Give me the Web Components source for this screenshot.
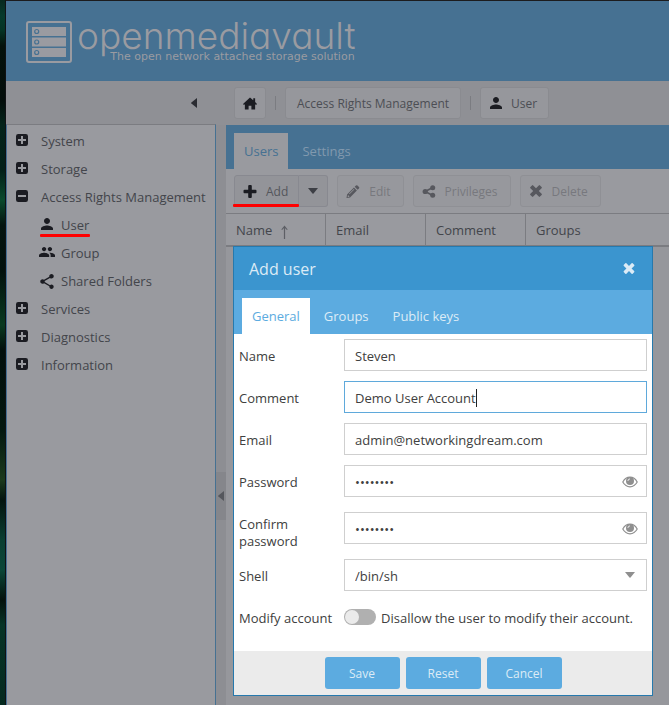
<!DOCTYPE html>
<html lang="en">
<head>
<meta charset="utf-8">
<title>openmediavault</title>
<style>
  html, body { height: 100%; }
  body { margin: 0; background: #96979c; font: 13px/17px "Open Sans", "Liberation Sans", sans-serif; color: #43454b; }
</style>
</head>
<body>
<omv-app></omv-app>
<script>
const ICONS = {
  person: ['4 4 16 16', '<path d="M12 12c2.21 0 4-1.79 4-4s-1.79-4-4-4-4 1.79-4 4 1.79 4 4 4zm0 2c-2.67 0-8 1.34-8 4v2h16v-2c0-2.66-5.33-4-8-4z"/>'],
  group: ['1 4 22 16', '<path d="M16 11c1.66 0 2.99-1.34 2.99-3S17.66 5 16 5c-1.66 0-3 1.34-3 3s1.34 3 3 3zm-8 0c1.66 0 2.99-1.34 2.99-3S9.66 5 8 5C6.34 5 5 6.34 5 8s1.34 3 3 3zm0 2c-2.33 0-7 1.17-7 3.5V19h14v-2.5c0-2.33-4.67-3.5-7-3.5zm8 0c-.29 0-.62.02-.97.05 1.16.84 1.97 1.97 1.97 3.45V19h6v-2.5c0-2.33-4.67-3.5-7-3.5z"/>'],
  share: ['3 2 18 20', '<path d="M18 16.08c-.76 0-1.44.3-1.96.77L8.91 12.7c.05-.23.09-.46.09-.7s-.04-.47-.09-.7l7.05-4.11c.54.5 1.25.81 2.04.81 1.66 0 3-1.34 3-3s-1.34-3-3-3-3 1.34-3 3c0 .24.04.47.09.7L8.04 9.81C7.5 9.31 6.79 9 6 9c-1.66 0-3 1.34-3 3s1.34 3 3 3c.79 0 1.5-.31 2.04-.81l7.12 4.16c-.05.21-.08.43-.08.65 0 1.61 1.31 2.92 2.92 2.92s2.92-1.31 2.92-2.92-1.31-2.92-2.92-2.92z"/>'],
  shareAlt: ['0 0 14 14', '<path d="M11.2 2.8 2.8 7l8.4 4.2" fill="none" stroke="currentColor" stroke-width="1.8"/><circle cx="11" cy="2.9" r="2.7"/><circle cx="2.9" cy="7" r="2.8"/><circle cx="11" cy="11.1" r="2.7"/>'],
  expand: ['0 0 12 12', '<path fill-rule="evenodd" d="M2.2 0h7.6A2.2 2.2 0 0 1 12 2.200v7.600A2.200 2.200 0 0 1 9.800 12H2.200A2.200 2.200 0 0 1 0 9.800V2.200A2.200 2.200 0 0 1 2.200 0zM5 2v3H2v2h3v3h2V7h3V5H7V2z"/>'],
  collapse: ['0 0 12 12', '<path fill-rule="evenodd" d="M2.200 0h7.600A2.200 2.200 0 0 1 12 2.200v7.600A2.200 2.200 0 0 1 9.800 12H2.200A2.200 2.200 0 0 1 0 9.800V2.200A2.200 2.200 0 0 1 2.200 0zM2 5v2h8V5z"/>'],
  home: ['0 0 15 13', '<path d="M7.500 0 11 3V1h2v3.800L15 7l-1 1-1-.6V13H9V9H6v4H2V7.400L1 8 0 7z"/>'],
  plus: ['0 0 13 13', '<path d="M5.700 0h1.600q1 0 1 1v3.700H12q1 0 1 1v1.600q0 1-1 1H8.300V12q0 1-1 1H5.700q-1 0-1-1V8.300H1q-1 0-1-1V5.700q0-1 1-1h3.700V1q0-1 1-1z"/>'],
  pencil: ['0 0 14 14', '<path fill-rule="evenodd" d="M10.200.6q.8-.8 1.600 0l1.600 1.600q.8.800 0 1.600L12 5.200 8.800 2zM8 2.800 11.200 6 3.800 13.400 0 14l.6-3.800zM1.600 10.700l-.4 2 1 .2 1.100-.5zM7.900 4.300 2.700 9.500l.5.5 5.200-5.200z"/>'],
  times: ['0 0 12 12', '<path d="M2 .4q.6-.6 1.200 0L6 3.200 8.800.4q.6-.6 1.200 0L11.600 2q.6.600 0 1.200L8.800 6l2.800 2.800q.6.600 0 1.200L10 11.600q-.6.600-1.200 0L6 8.800l-2.800 2.800q-.6.600-1.200 0L.4 10q-.6-.6 0-1.200L3.200 6 .4 3.200q-.6-.6 0-1.200z"/>'],
  down: ['0 0 10 6', '<path d="M0 0h10L5.500 5.600q-.5.500-1 0z"/>'],
  left: ['0 0 6 10', '<path d="M6 0v10L.4 5.500q-.5-.5 0-1z"/>'],
  sort: ['0 0 7 14', '<path d="M3.500 14V2" fill="none" stroke="currentColor" stroke-width="1.200"/><path d="M.3 4.600 3.500.6l3.200 4-.8.500-2.400-2.500L1.100 5.100z"/>'],
  eye: ['0 0 16 12', '<path d="M.8 6Q3.500 1.200 8 1.200T15.200 6Q12.500 10.800 8 10.800T.8 6z" fill="none" stroke="currentColor" stroke-width="1.200"/><circle cx="8" cy="5" r="4"/><path d="M5.900 5Q5.900 2.900 8 2.900" fill="none" stroke="#fff" stroke-width=".8"/>'],
  logo: ['0 0 46 42', '<rect x="1" y="1" width="44" height="40" rx="2" fill="none" stroke="currentColor" stroke-width="2"/><path d="M6 6h34v9H6zm0 10.500h34v9H6zM6 27h34v9H6z"/><g fill="none" stroke="#467192" stroke-width="1.200"><circle cx="10.700" cy="10.500" r="2"/><circle cx="10.700" cy="21" r="2"/><circle cx="10.700" cy="31.500" r="2"/></g>']
};

function define(name, html, after) {
  const template = document.createElement('template');
  template.innerHTML = html;
  customElements.define(name, class extends HTMLElement {
    constructor() {
      super();
      this.attachShadow({ mode: 'open' }).append(template.content.cloneNode(true));
    }
    connectedCallback() { if (after) after(this, this.shadowRoot); }
  });
}

define('omv-icon', `<style>
  :host { display: inline-flex; flex: none; width: 12px; height: 12px; }
  svg { width: 100%; height: 100%; fill: currentColor; display: block; }
</style><svg aria-hidden="true"></svg>`, (host, root) => {
  const [box, body] = ICONS[host.getAttribute('name')];
  const svg = root.querySelector('svg');
  svg.setAttribute('viewBox', box);
  svg.innerHTML = body;
});

define('omv-header', `<style>
  :host { display: flex; align-items: flex-start; box-sizing: border-box; height: 80px; padding: 20px 20px 0; gap: 5px; background: #467192; color: #9a9ba1; }
  omv-icon { width: 46px; height: 42px; }
  .brand { display: grid; justify-items: end; }
  .word { font: 300 37px/30px Inter, Lato, sans-serif; font-feature-settings: "cv11" 1; white-space: nowrap; }
  .tag { font: 11px/12px "DejaVu Sans", sans-serif; padding-right: 1px; white-space: nowrap; }
</style><omv-icon name="logo"></omv-icon>
<div class="brand"><span class="word">openmediavault</span><span class="tag">The open network attached storage solution</span></div>`);

define('omv-breadcrumb', `<style>
  :host { display: flex; align-items: center; gap: 9px; font-size: 12px; }
  button { font: inherit; color: #4c4e54; background: #96979c; border: 1px solid #8a8b90; border-radius: 3px; height: 32px; padding: 0 11px; display: flex; align-items: center; gap: 9px; white-space: nowrap; }
  button.home { padding: 0 8px; }
  .page { padding: 0 11px 0 9px; }
  i { width: 1px; height: 14px; background: #7b7c81; }
  omv-icon { color: #1b1c22; width: 12px; }
  .home omv-icon { width: 14px; height: 13px; }
</style>
<button class="home" aria-label="Home"><omv-icon name="home"></omv-icon></button><i></i>
<button>Access Rights Management</button><i></i>
<button class="page"><omv-icon name="person"></omv-icon>User</button>`);

define('omv-tree-item', `<style>
  :host { display: block; }
  a { display: flex; align-items: center; height: 28px; color: inherit; text-decoration: none; padding-left: 9px; white-space: nowrap; }
  .ico { width: 25px; height: 14px; color: #1b1c22; display: flex; }
  :host([child]) a { padding-left: 34px; }
  :host([child]) .ico { width: 20px; }
  omv-icon[name=group] { width: 16px; margin-left: -2px; }
  omv-icon[name=share] { width: 14px; height: 15px; margin-left: -1px; }
  :host([marked]) a { position: relative; }
  :host([marked]) a::after { content: ""; position: absolute; left: 33px; bottom: 2px; width: 50px; height: 3px; background: #fe0000; border-radius: 1px; }
</style><a href="#"><span class="ico"></span><slot></slot></a>`, (host, root) => {
  root.querySelector('.ico').innerHTML = `<omv-icon name="${host.getAttribute('icon')}"></omv-icon>`;
});

define('omv-nav', `<style>
  :host { display: block; box-sizing: border-box; background: #999a9f; border: 1px solid #467192; border-top: 1px solid #7b7c81; border-bottom: 0; padding-top: 2px; }
</style><nav aria-label="Navigation">
<omv-tree-item icon="expand">System</omv-tree-item>
<omv-tree-item icon="expand">Storage</omv-tree-item>
<omv-tree-item icon="collapse">Access Rights Management</omv-tree-item>
<omv-tree-item icon="person" child marked>User</omv-tree-item>
<omv-tree-item icon="group" child>Group</omv-tree-item>
<omv-tree-item icon="share" child>Shared Folders</omv-tree-item>
<omv-tree-item icon="expand">Services</omv-tree-item>
<omv-tree-item icon="expand">Diagnostics</omv-tree-item>
<omv-tree-item icon="expand">Information</omv-tree-item>
</nav>`);

define('omv-tabs', `<style>
  :host { display: flex; align-items: flex-end; box-sizing: border-box; height: 44px; padding: 0 8px; gap: 4px; background: var(--bar); }
  ::slotted(button) { font: inherit; height: 36px; border: 0; padding: 0 10px; background: none; color: var(--tab); white-space: nowrap; }
  ::slotted(button[aria-selected=true]) { background: var(--panel); color: var(--bar); }
</style><slot></slot>`, host => host.setAttribute('role', 'tablist'));

define('omv-tool', `<style>
  :host { display: flex; }
  button { font: inherit; font-size: 12px; box-sizing: border-box; color: #54565c; background: #939499; border: 1px solid #888990; border-radius: 3px; height: 32px; padding: 0 12px 0 8px; display: flex; align-items: center; gap: 9px; white-space: nowrap; }
  .ico { display: flex; }
  omv-icon { width: 14px; height: 13px; color: #1b1c22; }
  .ico omv-icon[name=times] { height: 12px; }
  button:disabled { color: #77787e; background: #97989d; border-color: #8f9095; }
  button:disabled omv-icon { color: #57585e; }
  .more { display: none; }
  :host([split]) .main { border-radius: 3px 0 0 3px; position: relative; padding-right: 10px; }
  :host([split]) .main::after { content: ""; position: absolute; left: -2px; bottom: -1px; width: 66px; height: 3px; background: #fe0000; border-radius: 1px; }
  :host([split]) .more { display: flex; border-left: 0; border-radius: 0 3px 3px 0; padding: 0 9px; }
  .more omv-icon { width: 10px; height: 6px; color: #3d3f45; }
</style><button class="main"><span class="ico"></span><slot></slot></button><button class="more" aria-label="More"><omv-icon name="down"></omv-icon></button>`, (host, root) => {
  root.querySelector('.ico').innerHTML = `<omv-icon name="${host.getAttribute('icon')}"></omv-icon>`;
  root.querySelector('.main').disabled = host.hasAttribute('disabled');
});

define('omv-users', `<style>
  :host { display: block; min-width: 0; background: #96979c; --bar: #467192; --tab: #8199ae; --panel: #999a9f; }
  .tools { display: flex; align-items: center; gap: 9px; height: 44px; padding: 0 8px; background: #999a9f; border-bottom: 1px solid #7b7c81; }
  table { width: 100%; table-layout: fixed; border-collapse: separate; border-spacing: 0; background: #999a9f; }
  th { box-sizing: border-box; width: 100px; height: 33px; padding: 1px 10px 0; text-align: left; font-weight: normal; border-right: 1px solid #7b7c81; border-bottom: 2px solid #7b7c81; line-height: 30px; }
  th:last-child { width: auto; border-right: 0; }
  omv-icon { width: 7px; height: 14px; margin-left: 9px; vertical-align: middle; color: #5d5f65; }
</style>
<omv-tabs><button role="tab" aria-selected="true">Users</button><button role="tab">Settings</button></omv-tabs>
<div class="tools"><omv-tool icon="plus" split>Add</omv-tool><omv-tool icon="pencil" disabled>Edit</omv-tool><omv-tool icon="shareAlt" disabled>Privileges</omv-tool><omv-tool icon="times" disabled>Delete</omv-tool></div>
<table><thead><tr><th>Name<omv-icon name="sort"></omv-icon></th><th>Email</th><th>Comment</th><th>Groups</th></tr></thead></table>`);

define('omv-field', `<style>
  :host { display: grid; grid-template-columns: 105px minmax(0, 1fr); grid-auto-rows: 32px; min-height: 32px; align-items: start; }
  label { padding-top: 9px; }
  .box { position: relative; display: grid; align-items: center; }
  input, select { grid-area: 1 / 1; appearance: none; width: 100%; box-sizing: border-box; height: 32px; margin: 0; padding: 2px 10px 0; border: 1px solid #cfcfcf; border-radius: 0; background: #fff; font: inherit; color: #404040; outline: 0; }
  omv-icon { grid-area: 1 / 1; justify-self: end; margin-right: 9px; width: 16px; color: #8f8f8f; pointer-events: none; }
  omv-icon[name=eye] { margin-top: 2px; }
  omv-icon[name=down] { width: 10px; height: 6px; margin-right: 12px; }
  :host([secret]) { min-height: 37px; }
  :host([tall]) label { padding: 4px 10px 0 0; }
  :host([active]) input { border-color: #5fa9db; caret-color: transparent; }
  .caret { display: none; position: absolute; left: 132px; top: 8px; width: 1px; height: 18px; background: #222; }
  :host([active]) .caret { display: block; }
</style><label for="f"></label><div class="box"></div>`, (host, root) => {
  root.querySelector('label').textContent = host.getAttribute('label');
  const box = root.querySelector('.box');
  const value = host.getAttribute('value');
  if (host.hasAttribute('select')) {
    box.innerHTML = `<select id="f"><option>${value}</option></select><omv-icon name="down"></omv-icon>`;
  } else if (host.hasAttribute('secret')) {
    box.innerHTML = `<input id="f" type="password" value="${value}"><omv-icon name="eye"></omv-icon>`;
  } else {
    box.innerHTML = `<input id="f" type="text" value="${value}"><span class="caret"></span>`;
  }
});

define('omv-toggle', `<style>
  :host { display: grid; grid-template-columns: 105px minmax(0, 1fr); min-height: 32px; align-items: center; }
  label { padding-top: 2px; white-space: nowrap; }
  div { display: flex; align-items: center; gap: 5px; }
  input { appearance: none; flex: none; box-sizing: border-box; width: 32px; height: 16px; margin: 0; padding: 1px; border-radius: 8px; background: #b0b0b0; display: flex; }
  input::before { content: ""; width: 14px; height: 14px; border-radius: 7px; background: #ebebeb; }
</style><label for="t">Modify account</label><div><input id="t" type="checkbox"><label for="t">Disallow the user to modify their account.</label></div>`);

define('omv-dialog', `<style>
  :host { display: block; box-sizing: border-box; border: 1px solid #2679ad; background: #fff; color: #404040; --bar: #5cabe0; --tab: #dcebf6; --panel: #fff; }
  header { display: flex; align-items: center; justify-content: space-between; height: 43px; padding: 0 17px 0 15px; background: #3b95cf; color: #dcebf6; }
  h2 { margin: 0; font-size: 16px; line-height: 22px; font-weight: normal; }
  header button { display: flex; border: 0; padding: 0; background: none; color: inherit; }
  header omv-icon { width: 12px; height: 11px; }
  form { display: grid; gap: 10px; padding: 5px 5px 18px; }
  footer { display: flex; justify-content: center; gap: 6px; padding: 6px; background: #ebebeb; }
  footer button { font: inherit; font-size: 12px; width: 75px; height: 32px; border: 0; border-radius: 3px; background: #5cabe0; color: #dcebf6; }
</style>
<header><h2>Add user</h2><button aria-label="Close"><omv-icon name="times"></omv-icon></button></header>
<omv-tabs><button role="tab" aria-selected="true">General</button><button role="tab">Groups</button><button role="tab">Public keys</button></omv-tabs>
<form>
<omv-field label="Name" value="Steven"></omv-field>
<omv-field label="Comment" value="Demo User Account" active></omv-field>
<omv-field label="Email" value="admin@networkingdream.com"></omv-field>
<omv-field label="Password" value="password" secret></omv-field>
<omv-field label="Confirm password" value="password" secret tall></omv-field>
<omv-field label="Shell" value="/bin/sh" select></omv-field>
<omv-toggle></omv-toggle>
</form>
<footer><button>Save</button><button>Reset</button><button>Cancel</button></footer>`, host => {
  host.setAttribute('role', 'dialog');
  host.setAttribute('aria-label', 'Add user');
});

define('omv-app', `<style>
  :host { position: relative; display: grid; grid-template-columns: 6px minmax(0, 1fr); min-height: 100%; }
  .wallpaper { border-right: 1px solid #101214; box-sizing: border-box; background: linear-gradient(#08291f 0, #063a2b 16px, #053425 30px, #04120c 46px, #030d0a 100px, #04241a 125px, #032018 170px, #0a4a2c 200px, #04150f 225px, #02110c 270px, #093a20 325px, #020f0b 350px, #03180f 430px, #1b3a1c 480px, #03150f 500px, #0a3f31 540px, #0b4737 570px, #04120c 600px, #063426 625px, #052a1f 705px); }
  .shell { display: grid; grid-template-rows: auto 44px 1fr; border-top: 1px solid #1c1c1e; background: #8f9095; }
  .bar { display: grid; grid-template-columns: 220px minmax(0, 1fr); align-items: center; padding-right: 8px; overflow: hidden; }
  .fold { justify-self: end; margin-right: 29px; display: flex; border: 0; padding: 0; background: none; color: #2a2c32; }
  .fold omv-icon, .split omv-icon { width: 6px; height: 10px; }
  omv-breadcrumb { padding-left: 8px; }
  .work { display: grid; grid-template-columns: 210px 10px minmax(0, 1fr); }
  omv-nav { margin-top: -1px; }
  .split { display: flex; align-items: center; background: #8d8e93; }
  .split button { width: 10px; height: 48px; margin-top: 162px; padding: 0; border: 0; background: #85868b; color: #55575d; display: flex; align-items: center; justify-content: center; }
  omv-dialog { position: absolute; left: 233px; right: 16px; top: 246px; }
</style>
<div class="wallpaper"></div>
<div class="shell">
  <omv-header></omv-header>
  <div class="bar"><button class="fold" aria-label="Collapse"><omv-icon name="left"></omv-icon></button><omv-breadcrumb></omv-breadcrumb></div>
  <div class="work"><omv-nav></omv-nav><div class="split"><button aria-label="Collapse navigation"><omv-icon name="left"></omv-icon></button></div><omv-users></omv-users></div>
</div>
<omv-dialog></omv-dialog>`);
</script>
</body>
</html>
